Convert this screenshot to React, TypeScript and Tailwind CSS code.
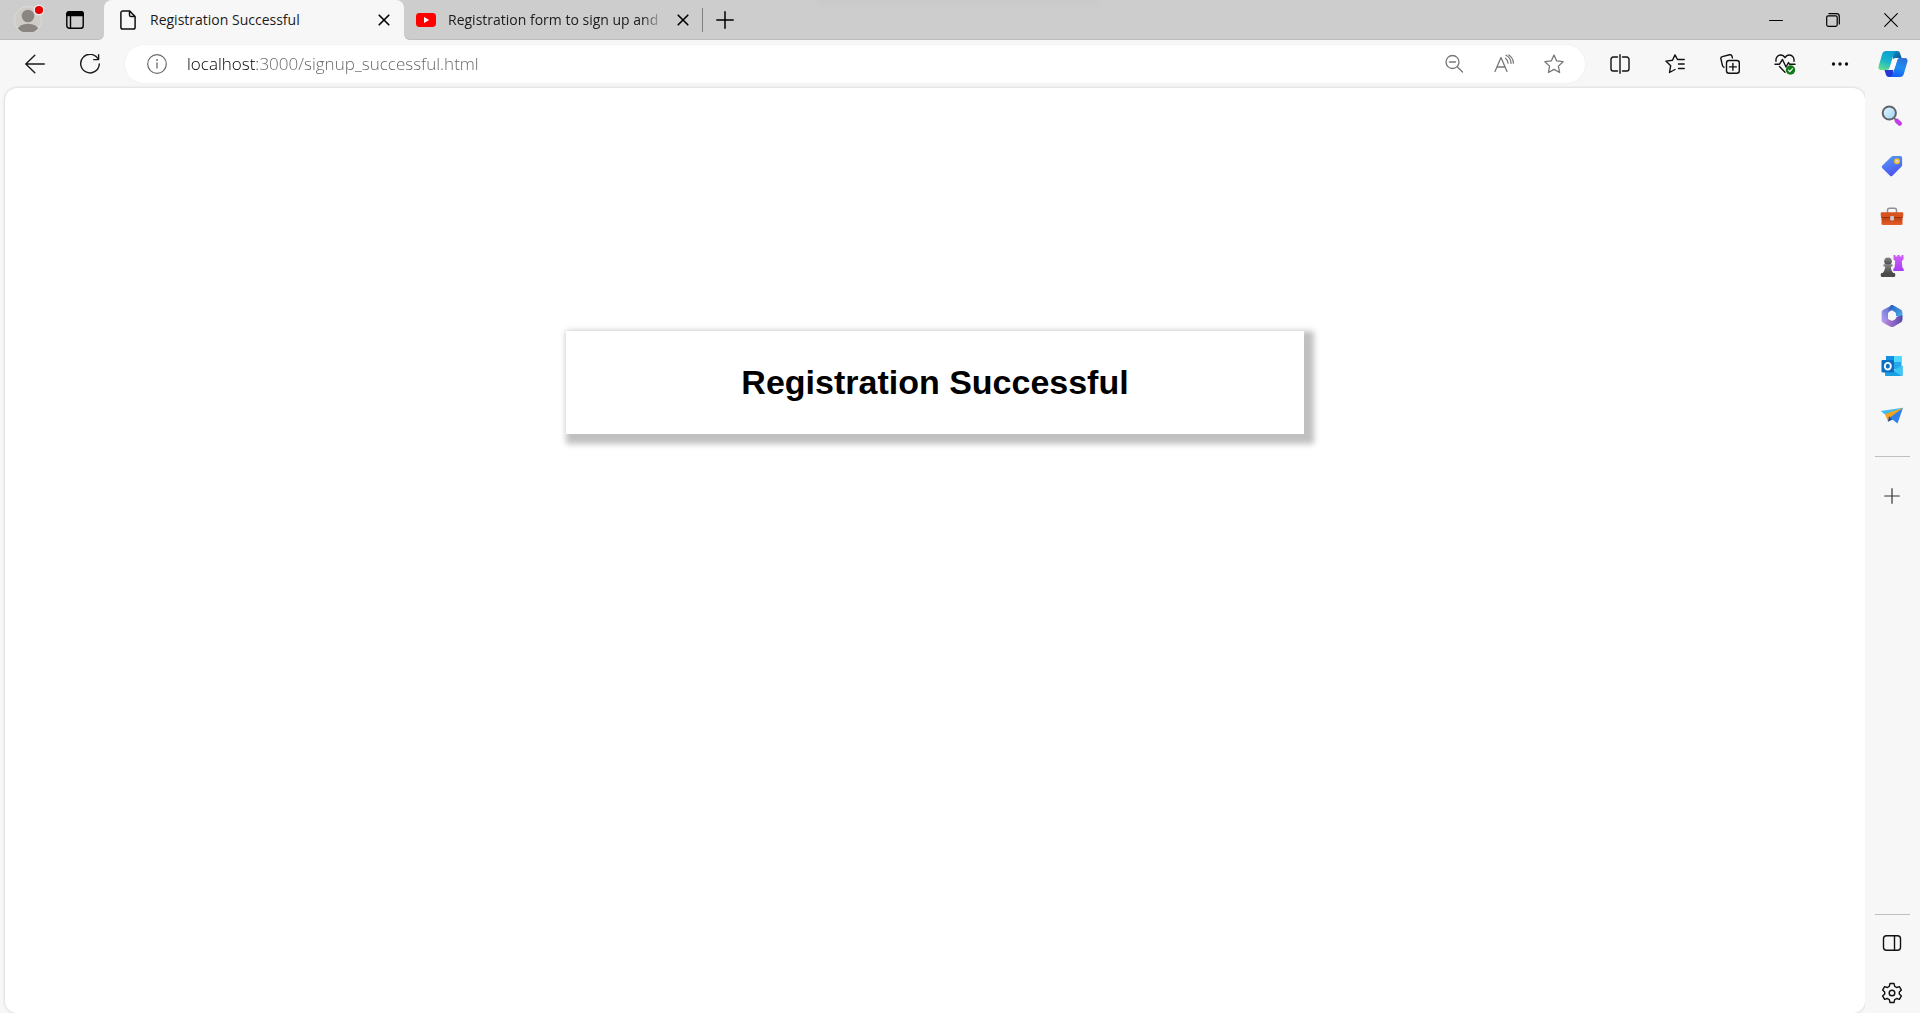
import React from 'react';

type IconProps = { children: React.ReactNode; size?: number; className?: string };

function Line({ children, size = 20, className = '' }: IconProps) {
  return (
    <svg
      width={size}
      height={size}
      viewBox={`0 0 ${size} ${size}`}
      fill="none"
      stroke="currentColor"
      strokeWidth="1.4"
      strokeLinecap="round"
      strokeLinejoin="round"
      className={'shrink-0 ' + className}
      aria-hidden="true"
    >
      {children}
    </svg>
  );
}

function Close() {
  return (
    <Line size={12}>
      <path d="M1.2 1.2l9.6 9.6M10.8 1.2l-9.6 9.6" strokeWidth="1.6" />
    </Line>
  );
}

function Avatar() {
  return (
    <svg width="32" height="32" viewBox="0 0 32 32" aria-hidden="true">
      <defs>
        <clipPath id="avatarClip">
          <circle cx="16" cy="20" r="13" />
        </clipPath>
      </defs>
      <circle cx="16" cy="20" r="13.5" fill="#cfccc8" stroke="#dedcd8" />
      <g clipPath="url(#avatarClip)" fill="#8a8580">
        <circle cx="16" cy="16" r="6.3" />
        <ellipse cx="16" cy="30" rx="10.3" ry="6.3" />
      </g>
      <circle cx="27" cy="10" r="4.800" fill="#e60000" stroke="#e9e9e9" strokeWidth="1.400" />
    </svg>
  );
}

function YouTube() {
  return (
    <svg width="20" height="14" viewBox="0 0 20 14" className="shrink-0" aria-hidden="true">
      <rect width="20" height="14" rx="3.4" fill="#f00" />
      <path d="M8 4l5.2 3L8 10z" fill="#fff" />
    </svg>
  );
}

function Copilot() {
  return (
    <svg width="30" height="28" viewBox="0 0 30 28" aria-hidden="true">
      <defs>
        <linearGradient id="cpA" x1=".6" y1="0" x2=".2" y2="1">
          <stop offset="0" stopColor="#0a9fd0" />
          <stop offset=".5" stopColor="#17b4cc" />
          <stop offset="1" stopColor="#63dd8c" />
        </linearGradient>
        <linearGradient id="cpB" x1=".7" y1="0" x2=".4" y2="1">
          <stop offset="0" stopColor="#2f6fd8" />
          <stop offset=".5" stopColor="#1f8df0" />
          <stop offset="1" stopColor="#1560f5" />
        </linearGradient>
        <linearGradient id="cpC" x1="0" y1="0" x2="1" y2="1">
          <stop offset="0" stopColor="#0c8fc9" />
          <stop offset="1" stopColor="#0a4f86" />
        </linearGradient>
      </defs>
      <path d="M15 1h4.200c1.600 0 2.400.8 2.900 2.400L23.600 8H18.500c-2 0-2.900.8-3.400 2.400z" fill="url(#cpC)" />
      <path d="M15 27h-4.200c-1.600 0-2.400-.8-2.900-2.400L6.500 20H11c2.500 0 3.600-.6 4.300-2.700z" fill="#2438d6" />
      <path d="M8 1h11c-2 .4-2.700 1.600-3.300 3.500l-4.200 13C10.900 19.300 10 20 8.400 20H3.200C1 20 0 18.400.6 16.300L4.200 4C4.800 2 6 1 8 1z" fill="url(#cpA)" />
      <path d="M22 27H11.500c2-.4 2.800-1.600 3.400-3.500l4.200-13C19.700 8.700 20.500 8 22 8h4.800c2.200 0 3.200 1.600 2.600 3.700L25.800 24c-.6 2-1.800 3-3.800 3z" fill="url(#cpB)" />
      <path d="M17.200 8.300h2.900c-.5.500-.8 1.200-1.100 2.100L16.200 19c-.2.700-.8 1-1.500 1h-3.800c.6-.5.900-1.200 1.200-2l2.500-7.700c.4-1.300 1.200-2 2.600-2z" fill="#fbfbfb" />
    </svg>
  );
}

function Magnifier() {
  return (
    <svg width="22" height="22" viewBox="0 0 22 22" aria-hidden="true">
      <defs>
        <linearGradient id="lens" x1="0" y1="0" x2="1" y2="1">
          <stop offset="0" stopColor="#e4f5ff" />
          <stop offset="1" stopColor="#9fd4f6" />
        </linearGradient>
      </defs>
      <path d="M13 13l3 3" stroke="#777" strokeWidth="2" />
      <path d="M15.800 15.800l3 2.800" stroke="#c63be8" strokeWidth="4.400" strokeLinecap="round" />
      <circle cx="8.300" cy="8" r="6.600" fill="url(#lens)" stroke="#606468" strokeWidth="2" />
    </svg>
  );
}

function Tag() {
  return (
    <svg width="22" height="22" viewBox="0 0 22 22" aria-hidden="true">
      <defs>
        <linearGradient id="tagFill" x1=".2" y1="0" x2=".6" y2="1">
          <stop offset="0" stopColor="#549bf5" />
          <stop offset="1" stopColor="#4a50f0" />
        </linearGradient>
      </defs>
      <path d="M12.300 1H19.200c1.200 0 1.900.7 1.900 1.900v6.900c0 .8-.3 1.400-.8 2l-8.900 8.900c-.7.700-1.700.7-2.400 0L1.400 13.200c-.8-.8-.8-1.800 0-2.600L10.300 1.800c.5-.5 1.200-.8 2-.8z" fill="url(#tagFill)" />
      <circle cx="16" cy="6.200" r="2.200" fill="#d7d4f8" stroke="#f2c21c" strokeWidth="1.600" />
    </svg>
  );
}

function Toolbox() {
  return (
    <svg width="24" height="22" viewBox="0 0 24 22" aria-hidden="true">
      <defs>
        <linearGradient id="boxFill" x1="0" y1="0" x2="0" y2="1">
          <stop offset="0" stopColor="#b83c12" />
          <stop offset="1" stopColor="#e85e24" />
        </linearGradient>
      </defs>
      <path d="M7.500 8V5.200c0-1.200.8-2 2-2h5c1.200 0 2 .8 2 2V8" fill="none" stroke="#8d9196" strokeWidth="1.500" />
      <rect x="1.500" y="11" width="21" height="9" rx="1.500" fill="url(#boxFill)" />
      <rect x=".8" y="7.200" width="22.400" height="5" rx="1" fill="#d9531e" />
      <path d="M1.500 12.500h21" stroke="#96300e" />
      <rect x="10.200" y="11" width="3.800" height="4.400" rx="1.200" fill="#c5cad0" />
    </svg>
  );
}

function Games() {
  return (
    <svg width="24" height="24" viewBox="0 0 24 24" aria-hidden="true">
      <defs>
        <linearGradient id="rook" x1="0" y1="0" x2="0" y2="1">
          <stop offset="0" stopColor="#cf62f7" />
          <stop offset="1" stopColor="#a63cf0" />
        </linearGradient>
        <linearGradient id="pawn" x1="0" y1="0" x2="0" y2="1">
          <stop offset="0" stopColor="#858585" />
          <stop offset="1" stopColor="#4a4a4a" />
        </linearGradient>
      </defs>
      <path d="M13.500 1h2v1.600h1.800V1h2.400v1.600h1.800V1h2v4.500L21.800 7l.6 6.500 1.300 1.200V17H13.300v-2.300l1.300-1.200.6-6.500-1.700-1.500z" fill="url(#rook)" />
      <circle cx="8" cy="7.200" r="3.800" fill="url(#pawn)" />
      <path d="M3.500 10.200h9v2.200h-1.700c.2 3 1 4.900 2.900 6.900H2.300c1.900-2 2.700-3.900 2.900-6.900H3.500z" fill="url(#pawn)" />
      <rect x=".8" y="19" width="14.400" height="4" rx="1.200" fill="#4a4a4a" />
    </svg>
  );
}

function Microsoft365() {
  return (
    <svg width="22" height="24" viewBox="0 0 22 24" aria-hidden="true">
      <defs>
        <linearGradient id="mA" x1="0" y1="1" x2="1" y2="0">
          <stop offset="0" stopColor="#b9a2f2" />
          <stop offset="1" stopColor="#4b62c8" />
        </linearGradient>
        <linearGradient id="mB" x1="0" y1="0" x2="1" y2="1">
          <stop offset="0" stopColor="#2457b8" />
          <stop offset="1" stopColor="#53b9f2" />
        </linearGradient>
        <linearGradient id="mC" x1="0" y1="0" x2="1" y2="0">
          <stop offset="0" stopColor="#c48be2" />
          <stop offset="1" stopColor="#5a46a8" />
        </linearGradient>
      </defs>
      <path d="M11.500 1L2.300 5.800C1.200 6.500.6 7.500.6 8.800v7.400c0 1 .5 1.900 1.400 2.500l5-2.900V10c0-1 .5-1.800 1.300-2.300l3.200-1.900z" fill="url(#mA)" />
      <path d="M9.500 1.400c1-.6 2-.6 3 0l7.200 4.200c1 .6 1.700 1.700 1.700 3v7l-6.500-3.800V9.500c0-.7-.4-1.300-1-1.600L9.500 5.600 7.200 7z" fill="url(#mB)" />
      <path d="M2 18.700l7.500 4c1 .5 2 .5 3 0l7.200-4.200c1.100-.7 1.700-1.800 1.700-3V11l-6.500 2.500c0 1-.4 1.500-1 1.900l-2 1.200c-.6.300-1.200.3-1.800 0L7 15z" fill="url(#mC)" />
      <circle cx="11" cy="12" r="3.900" fill="#f7f7f7" />
    </svg>
  );
}

function Outlook() {
  return (
    <svg width="22" height="22" viewBox="0 0 22 22" aria-hidden="true">
      <rect x="5" y="1" width="15.500" height="13" rx="1" fill="#28a8ea" />
      <path d="M5 1h8v6H5z" fill="#1490df" />
      <path d="M13 1h7.500v6H13z" fill="#50d9ff" />
      <path d="M4 11l9 4 8.500-4.500V20c0 .6-.4 1-1 1H5c-.6 0-1-.4-1-1z" fill="#1ba0e4" />
      <path d="M21.500 10.500V20c0 .6-.4 1-1 1L12 15.500z" fill="#3cc7f5" />
      <rect x=".5" y="5" width="12.500" height="12.500" rx="1" fill="#0a6fc4" />
      <ellipse cx="6.800" cy="11.200" rx="3" ry="3.300" fill="none" stroke="#fff" strokeWidth="1.900" />
    </svg>
  );
}

function Plane() {
  return (
    <svg width="24" height="18" viewBox="0 0 24 18" aria-hidden="true">
      <path d="M.8 4L23 .8 7.500 9.500z" fill="#39bdf3" />
      <path d="M5 7L23 .8l-15 14z" fill="#f2a51c" />
      <path d="M8 14.800l1-5.500 4 3z" fill="#174f9c" />
      <path d="M10 10.500L23 .8 17.500 16.500z" fill="#2f80ed" />
    </svg>
  );
}

const starPath = 'M10 1l2.700 5.900 6.400.8-4.700 4.400 1.200 6.400L10 15.400l-5.600 3.100 1.200-6.400L.9 7.700l6.400-.8z';

function IconButton({ label, className, children }: { label: string; className: string; children: React.ReactNode }) {
  return (
    <button type="button" aria-label={label} className={'flex shrink-0 items-center justify-center ' + className}>
      {children}
    </button>
  );
}

function TabStrip() {
  return (
    <header className="flex h-10 bg-[#f7f7f7]">
      <div className="flex w-[104px] shrink-0 items-start rounded-br-md border-b border-[#bdbdbd] bg-[#cdcdcd] pl-3">
        <IconButton label="Profile" className="h-8 w-8">
          <Avatar />
        </IconButton>
        <IconButton label="Tab actions" className="ml-[15px] h-10 w-8">
          <Line className="text-black">
            <rect x="1.800" y="1.800" width="16.400" height="16.400" rx="2.500" />
            <path d="M1.800 5.500V4a2.200 2.200 0 0 1 2.200-2.200h12A2.200 2.200 0 0 1 18.200 4v1.500z" fill="currentColor" />
            <path d="M5.500 6v12" />
          </Line>
        </IconButton>
      </div>
      <div className="w-[300px] shrink-0 bg-linear-to-b from-[#cdcdcd] from-50% to-[#f7f7f7] to-50%">
        <div className="flex h-10 items-center rounded-t-lg bg-[#f7f7f7] pr-[14px] pl-4">
          <svg width="16" height="20" viewBox="0 0 16 20" fill="none" stroke="#111" strokeWidth="1.500" strokeLinejoin="round" aria-hidden="true">
            <path d="M9.500.9H2.800C1.700.9.9 1.700.9 2.800v14.400c0 1.100.8 1.900 1.900 1.900h10.400c1.100 0 1.900-.8 1.900-1.900V6.500zM9.500.9v4c0 .9.700 1.600 1.600 1.600h4" />
          </svg>
          <span className="ml-[14px] flex-1 truncate text-sm text-[#1b1b1b]">Registration Successful</span>
          <IconButton label="Close tab Registration Successful" className="size-3">
            <Close />
          </IconButton>
        </div>
      </div>
      <div className="flex min-w-0 flex-1 items-center rounded-bl-md border-b border-[#bdbdbd] bg-[#cdcdcd] pl-3">
        <YouTube />
        <span className="ml-3 w-[216px] shrink-0 overflow-hidden mask-r-from-90% text-sm whitespace-nowrap text-[#1b1b1b]">
          Registration form to sign up and
        </span>
        <IconButton label="Close tab Registration form" className="ml-[11px] size-4">
          <Close />
        </IconButton>
        <span className="ml-[11px] h-6 w-px bg-[#808080]" />
        <IconButton label="New tab" className="ml-2 h-8 w-7">
          <Line size={18} className="text-black">
            <path d="M9 .8v16.400M.8 9h16.400" strokeWidth="1.500" />
          </Line>
        </IconButton>
        <div className="mr-auto ml-20 h-1 w-[280px] self-start bg-[#c8c8c8] blur-[2px]" />
        <IconButton label="Minimize" className="h-10 w-14">
          <Line size={14}>
            <path d="M.5 7.500h13" strokeWidth="1" stroke="#000" />
          </Line>
        </IconButton>
        <IconButton label="Restore" className="h-10 w-[58px]">
          <Line size={14} className="text-black">
            <rect x=".7" y="2.800" width="10.500" height="10.500" rx="1.500" strokeWidth="1.200" />
            <path d="M3 .7h7.500a2.800 2.800 0 0 1 2.800 2.800V11" strokeWidth="1.200" />
          </Line>
        </IconButton>
        <IconButton label="Close window" className="h-10 w-[58px]">
          <Line size={14} className="text-black">
            <path d="M.7.7l12.600 12.600M13.300.7L.7 13.300" strokeWidth="1.100" />
          </Line>
        </IconButton>
      </div>
    </header>
  );
}

function Toolbar() {
  return (
    <div className="flex h-12 items-center bg-[#f7f7f7] pr-[11px]">
      <IconButton label="Back" className="ml-[15px] h-10 w-10">
        <Line className="text-[#1b1b1b]">
          <path d="M19.300 10H.8M9.800 1.200L.8 10l9 8.800" />
        </Line>
      </IconButton>
      <IconButton label="Refresh" className="ml-[15px] h-10 w-10">
        <Line className="text-[#1b1b1b]">
          <path d="M18.200 5.200A9.300 9.300 0 1 0 19.300 10M18.600.8v4.800h-4.900" />
        </Line>
      </IconButton>
      <div className="ml-[15px] flex h-[38px] min-w-0 flex-1 items-center rounded-full bg-white pr-[6px] pl-[22px] shadow-[0_0_3px_#ececec]">
        <IconButton label="View site information" className="size-5">
          <Line className="text-[#6b6b6b]">
            <circle cx="10" cy="10" r="9.300" strokeWidth="1.200" />
            <path d="M10 8.800v5.200" strokeWidth="1.300" />
            <circle cx="10" cy="6" r=".9" fill="currentColor" stroke="none" />
          </Line>
        </IconButton>
        <input
          type="text"
          aria-label="Address bar"
          defaultValue="localhost:3000/signup_successful.html"
          className="ml-5 min-w-0 flex-1 bg-linear-to-r from-black from-[70px] to-[#606060] to-[70px] bg-clip-text text-[17px] leading-6 font-light text-[#606060] outline-none [-webkit-text-fill-color:transparent]"
        />
        <IconButton label="Zoom out" className="h-8 w-[50px] text-[#777]">
          <Line>
            <circle cx="8.500" cy="8" r="6.500" strokeWidth="1.300" />
            <path d="M13.300 12.800l5.200 5.200M5.500 8h6" strokeWidth="1.300" />
          </Line>
        </IconButton>
        <IconButton label="Read aloud" className="h-8 w-[50px] text-[#777]">
          <Line>
            <path d="M1 17.500L7 3.500l6 14M3 13h8" strokeWidth="1.300" />
            <path d="M11.500 4.200c1.400 1 2.400 2.600 2.600 5M12 1.200c2.900 1.400 4.900 4.400 5 8.200M14.800.9c2.700 1.800 4.500 4.900 4.600 8.300" strokeWidth="1.200" />
          </Line>
        </IconButton>
        <IconButton label="Add to favorites" className="h-8 w-[50px] text-[#777]">
          <Line>
            <path d={starPath} strokeWidth="1.300" />
          </Line>
        </IconButton>
      </div>
      <div className="ml-[7px] flex shrink-0 items-center text-[#111]">
        <IconButton label="Split screen" className="h-10 w-[55px]">
          <Line>
            <path d="M7.500 3H3.200A2.200 2.200 0 0 0 1 5.200v9.600A2.200 2.200 0 0 0 3.200 17h4.300M12.500 3h4.300A2.200 2.200 0 0 1 19 5.200v9.600a2.200 2.200 0 0 1-2.200 2.200h-4.300M10 .8v18.400" />
          </Line>
        </IconButton>
        <IconButton label="Favorites" className="h-10 w-[55px]">
          <Line>
            <path d="M12.500 5.500L10 .9 7.500 6.300l-6.600.8 4.800 4.600-1.200 6.800 5.500-3M12.500 5.500h6.700M13.500 10h5.700M13.500 14.500h5.700" />
          </Line>
        </IconButton>
        <IconButton label="Collections" className="h-10 w-[55px]">
          <Line>
            <rect x="6.500" y="6.500" width="12.800" height="12.800" rx="2.500" />
            <path d="M12.900 9.500v6.800M9.500 12.900h6.800M4 13.200c-.8-.2-1.300-.7-1.500-1.500L.9 4.900c-.3-1.200.4-2 1.400-2.300L9.600.8c1.200-.3 2.100.4 2.400 1.500l.4 1.600" />
          </Line>
        </IconButton>
        <IconButton label="Browser essentials" className="h-10 w-[55px]">
          <Line size={22}>
            <path d="M2 8.200C1.500 4.800 3.600 2 6.600 2c1.900 0 3.400 1 4.400 2.700C12 3 13.500 2 15.400 2c3 0 5.100 2.800 4.600 6.200M1 11.200h4.500l3-4.700 3.500 7.500 2.500-4.500 1 1.700H21M5.500 13.500l5.500 5.700" />
            <circle cx="16.500" cy="17" r="4.700" fill="#0f7b16" stroke="none" />
            <path d="M14.500 17.200l1.400 1.400 2.600-3" stroke="#fff" strokeWidth="1.100" />
          </Line>
        </IconButton>
        <IconButton label="Settings and more" className="h-10 w-[55px]">
          <Line>
            <g fill="currentColor" stroke="none">
              <circle cx="3.500" cy="10" r="1.700" />
              <circle cx="10" cy="10" r="1.700" />
              <circle cx="16.500" cy="10" r="1.700" />
            </g>
          </Line>
        </IconButton>
        <IconButton label="Copilot" className="ml-[10px] h-10 w-[32px]">
          <Copilot />
        </IconButton>
      </div>
    </div>
  );
}

function Sidebar() {
  return (
    <aside className="flex w-[55px] shrink-0 flex-col items-center bg-[#f7f7f7] pt-[3px] pr-px">
      <IconButton label="Search" className="h-[50px] w-10">
        <Magnifier />
      </IconButton>
      <IconButton label="Shopping" className="h-[50px] w-10">
        <Tag />
      </IconButton>
      <IconButton label="Tools" className="h-[50px] w-10">
        <Toolbox />
      </IconButton>
      <IconButton label="Games" className="h-[50px] w-10">
        <Games />
      </IconButton>
      <IconButton label="Microsoft 365" className="h-[50px] w-10">
        <Microsoft365 />
      </IconButton>
      <IconButton label="Outlook" className="h-[50px] w-10">
        <Outlook />
      </IconButton>
      <IconButton label="Drop" className="h-[50px] w-10">
        <Plane />
      </IconButton>
      <div className="mt-[15px] h-px w-[35px] bg-[#bfbfbf]" />
      <IconButton label="Customize" className="mt-[14px] h-[50px] w-10">
        <Line size={16} className="text-[#333]">
          <path d="M8 .7v14.600M.7 8h14.600" strokeWidth="1.200" />
        </Line>
      </IconButton>
      <div className="mt-auto h-px w-[35px] bg-[#bfbfbf]" />
      <IconButton label="Hide sidebar" className="mt-[3px] h-[50px] w-10">
        <Line className="text-[#111]">
          <rect x="1.500" y="2.800" width="17" height="14.400" rx="3" />
          <path d="M12.500 2.800v14.400" />
        </Line>
      </IconButton>
      <IconButton label="Settings" className="-mb-[5px] h-[50px] w-10">
        <Line size={22} className="text-[#111]">
          <path d="M9 1.500h4l.7 2.900 1.900 1.100 2.800-.9 2 3.500-2.100 2v1.800l2.100 2-2 3.500-2.800-.9-1.900 1.100-.7 2.900H9l-.7-2.900-1.900-1.100-2.800.9-2-3.500 2.100-2v-1.800l-2.100-2 2-3.500 2.800.9 1.900-1.100z" />
          <circle cx="11" cy="11" r="2.800" />
        </Line>
      </IconButton>
    </aside>
  );
}

export default function App() {
  return (
    <div className="flex min-h-screen flex-col bg-[#f7f7f7] font-['Open_Sans',sans-serif]">
      <TabStrip />
      <Toolbar />
      <div className="flex flex-1 pl-[5px]">
        <main className="min-w-0 flex-1 rounded-xl bg-white px-4 pt-[243px] shadow-[0_0_3px_#c4c4c4]">
          <div className="mx-auto max-w-[738px] bg-white py-8 text-center shadow-[5px_5px_6px_5px_#c0c0c0]">
            <h1 className="font-['Liberation_Sans',sans-serif] text-[34px] leading-[39px] font-bold text-black">
              Registration Successful
            </h1>
          </div>
        </main>
        <Sidebar />
      </div>
    </div>
  );
}
